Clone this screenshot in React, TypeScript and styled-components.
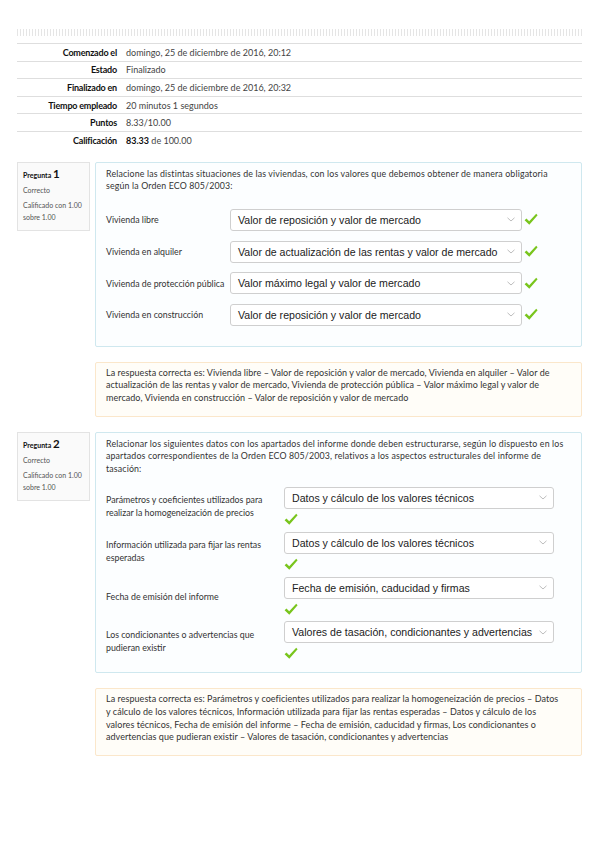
import React from "react";
import styled, { createGlobalStyle } from "styled-components";

const GlobalStyle = createGlobalStyle`
  html, body { margin: 0; padding: 0; background: #fff; }
  body { font-family: Lato, "Open Sans", "Liberation Sans", sans-serif; color: #333; }
  * { box-sizing: border-box; }
`;

const Page = styled.div`
  width: 599px;
  padding: 29px 17px 60px;
`;

const DotStrip = styled.div`
  height: 7px;
  margin-bottom: 7px;
  background-image: repeating-linear-gradient(90deg, #e2e2e2 0 1px, transparent 1px 3px);
  opacity: 0.9;
`;

const Summary = styled.div`
  display: flex;
  flex-direction: column;
`;

const SummaryRow = styled.div`
  display: grid;
  grid-template-columns: 100px 1fr;
  column-gap: 9px;
  align-items: center;
  height: 17.6px;
  border-top: 1px solid #dedede;
  font-size: 9px;
`;

const SummaryLabel = styled.div`
  text-align: right;
  font-weight: 700;
  color: #111;
  letter-spacing: -0.2px;
`;

const SummaryValue = styled.div`
  color: #444;
  b { color: #111; font-weight: 700; }
`;

const Question = styled.div<{ $top: number }>`
  display: flex;
  gap: 5px;
  margin-top: ${(p) => p.$top}px;
`;

const Info = styled.div`
  width: 73px;
  flex: none;
  align-self: flex-start;
  padding: 4px 5px 4px;
  border: 1px solid #e3e3e3;
  background: #fafafa;
  font-size: 7px;
  color: #555;
`;

const QNo = styled.div`
  font-weight: 700;
  color: #111;
  font-size: 7px;
  margin-bottom: 4px;
  span { font-size: 11.5px; }
`;

const InfoLine = styled.div`
  line-height: 12px;
  margin-bottom: 3px;
`;

const Content = styled.div`
  flex: 1;
  display: flex;
  flex-direction: column;
  gap: 15px;
`;

const Formulation = styled.div<{ $pb: number }>`
  border: 1px solid #cfe8ef;
  border-radius: 2px;
  background: #fcfeff;
  padding: 5px 10px ${(p) => p.$pb}px;
`;

const QText = styled.div`
  font-size: 8.8px;
  line-height: 12.8px;
  letter-spacing: 0.15px;
  color: #333;
`;

const MatchTable = styled.div<{ $label: number; $mt: number }>`
  display: grid;
  grid-template-columns: ${(p) => p.$label}px 1fr;
  margin-top: ${(p) => p.$mt}px;
`;

const Label = styled.div`
  font-size: 8.8px;
  line-height: 13px;
  color: #333;
  align-self: center;
  padding-right: 2px;
`;

const Control = styled.div<{ $stack: boolean; $h: number }>`
  display: flex;
  flex-direction: ${(p) => (p.$stack ? "column" : "row")};
  align-items: ${(p) => (p.$stack ? "flex-start" : "center")};
  justify-content: ${(p) => (p.$stack ? "center" : "flex-start")};
  gap: ${(p) => (p.$stack ? "4px" : "2px")};
  height: ${(p) => p.$h}px;
`;

const Select = styled.div<{ $w: number }>`
  width: ${(p) => p.$w}px;
  height: 22px;
  border: 1px solid #cfcfcf;
  border-radius: 3px;
  background: #fff;
  display: flex;
  align-items: center;
  justify-content: space-between;
  padding: 0 6px 0 7px;
  font-family: "Liberation Sans", Arial, sans-serif;
  font-size: 10.6px;
  color: #222;
  white-space: nowrap;
  overflow: hidden;
`;

const Feedback = styled.div`
  border: 1px solid #fbe7cb;
  border-radius: 2px;
  background: #fffdf8;
  padding: 4px 10px 11px;
  font-size: 9px;
  line-height: 12.7px;
  letter-spacing: 0.05px;
  color: #333;
`;

const Chevron = () => (
  <svg width="8" height="5" viewBox="0 0 8 5" style={{ flex: "none" }}>
    <polyline points="0.5,0.8 4,4 7.5,0.8" fill="none" stroke="#b5b5b5" strokeWidth="0.9" />
  </svg>
);

const Check = () => (
  <svg width="14" height="13" viewBox="0 0 14 13" style={{ flex: "none" }}>
    <path d="M0.6 7.3 L2.5 5.4 L5.2 8.2 L12.2 0.8 L13.6 2.2 L5.3 11.8 Z" fill="#79c51d" />
  </svg>
);

type Row = { label: string; value: string };

const q1Rows: Row[] = [
  { label: "Vivienda libre", value: "Valor de reposición y valor de mercado" },
  { label: "Vivienda en alquiler", value: "Valor de actualización de las rentas y valor de mercado" },
  { label: "Vivienda de protección pública", value: "Valor máximo legal y valor de mercado" },
  { label: "Vivienda en construcción", value: "Valor de reposición y valor de mercado" },
];

const q2Rows: Row[] = [
  { label: "Parámetros y coeficientes utilizados para realizar la homogeneización de precios", value: "Datos y cálculo de los valores técnicos" },
  { label: "Información utilizada para fijar las rentas esperadas", value: "Datos y cálculo de los valores técnicos" },
  { label: "Fecha de emisión del informe", value: "Fecha de emisión, caducidad y firmas" },
  { label: "Los condicionantes o advertencias que pudieran existir", value: "Valores de tasación, condicionantes y advertencias" },
];

const summary: [string, React.ReactNode][] = [
  ["Comenzado el", "domingo, 25 de diciembre de 2016, 20:12"],
  ["Estado", "Finalizado"],
  ["Finalizado en", "domingo, 25 de diciembre de 2016, 20:32"],
  ["Tiempo empleado", "20 minutos 1 segundos"],
  ["Puntos", "8.33/10.00"],
  ["Calificación", <><b>83.33</b> de 100.00</>],
];

const InfoBox = ({ n }: { n: number }) => (
  <Info>
    <QNo>
      Pregunta <span>{n}</span>
    </QNo>
    <InfoLine>Correcto</InfoLine>
    <InfoLine>
      Calificado con 1.00
      <br />
      sobre 1.00
    </InfoLine>
  </Info>
);

export default function App() {
  return (
    <>
      <GlobalStyle />
      <Page>
        <DotStrip />
        <Summary>
          {summary.map(([l, v]) => (
            <SummaryRow key={l}>
              <SummaryLabel>{l}</SummaryLabel>
              <SummaryValue>{v}</SummaryValue>
            </SummaryRow>
          ))}
        </Summary>

        <Question $top={13}>
          <InfoBox n={1} />
          <Content>
            <Formulation $pb={15}>
              <QText>
                Relacione las distintas situaciones de las viviendas, con los valores que debemos obtener de manera
                obligatoria
                <br />
                según la Orden ECO 805/2003:
              </QText>
              <MatchTable $label={124} $mt={11}>
                {q1Rows.map((r) => (
                  <React.Fragment key={r.label}>
                    <Label>{r.label}</Label>
                    <Control $stack={false} $h={31.6}>
                      <Select $w={292}>
                        <span>{r.value}</span>
                        <Chevron />
                      </Select>
                      <Check />
                    </Control>
                  </React.Fragment>
                ))}
              </MatchTable>
            </Formulation>
            <Feedback>
              La respuesta correcta es: Vivienda libre – Valor de reposición y valor de mercado, Vivienda en alquiler –
              Valor de
              <br />
              actualización de las rentas y valor de mercado, Vivienda de protección pública – Valor máximo legal y
              valor de
              <br />
              mercado, Vivienda en construcción – Valor de reposición y valor de mercado
            </Feedback>
          </Content>
        </Question>

        <Question $top={15}>
          <InfoBox n={2} />
          <Content>
            <Formulation $pb={9}>
              <QText>
                Relacionar los siguientes datos con los apartados del informe donde deben estructurarse, según lo
                dispuesto en los
                <br />
                apartados correspondientes de la Orden ECO 805/2003, relativos a los aspectos estructurales del informe
                de
                <br />
                tasación:
              </QText>
              <MatchTable $label={178} $mt={8}>
                {q2Rows.map((r) => (
                  <React.Fragment key={r.label}>
                    <Label>{r.label}</Label>
                    <Control $stack={true} $h={44.8}>
                      <Select $w={270}>
                        <span>{r.value}</span>
                        <Chevron />
                      </Select>
                      <Check />
                    </Control>
                  </React.Fragment>
                ))}
              </MatchTable>
            </Formulation>
            <Feedback>
              La respuesta correcta es: Parámetros y coeficientes utilizados para realizar la homogeneización de
              precios – Datos
              <br />
              y cálculo de los valores técnicos, Información utilizada para fijar las rentas esperadas – Datos y
              cálculo de los
              <br />
              valores técnicos, Fecha de emisión del informe – Fecha de emisión, caducidad y firmas, Los
              condicionantes o
              <br />
              advertencias que pudieran existir – Valores de tasación, condicionantes y advertencias
            </Feedback>
          </Content>
        </Question>
      </Page>
    </>
  );
}
